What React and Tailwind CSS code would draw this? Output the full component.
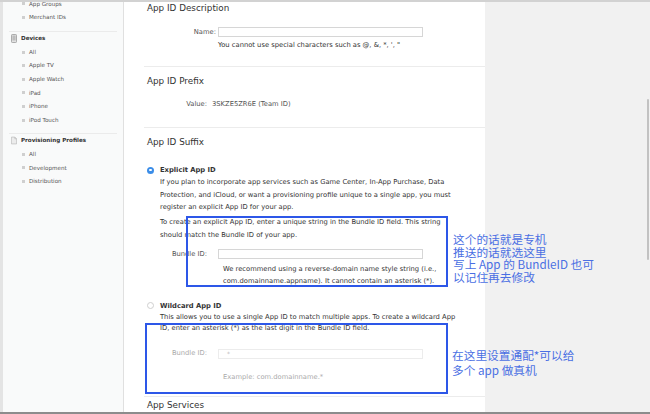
const sideFont = { fontFamily: '"DejaVu Sans", "Liberation Sans", sans-serif' };

function Bullet() {
  return <span className="inline-block w-[3px] h-[3px] bg-[#cfcfcf] mr-[4px]" />;
}

function SideItem({ children }) {
  return (
    <div className="h-[13.6px] flex items-center pl-[19px] text-[5.6px] text-[#555] whitespace-nowrap">
      <Bullet />
      {children}
    </div>
  );
}

function SideHeader({ icon, children }) {
  return (
    <div className="h-[13.6px] flex items-center pl-[8px] text-[5.6px] font-bold text-[#333] whitespace-nowrap">
      <span className="w-[6px] mr-[4px] flex items-center">{icon}</span>
      {children}
    </div>
  );
}

function DeviceIcon() {
  return (
    <svg width="6" height="9" viewBox="0 0 6 9">
      <rect x="0.5" y="0.5" width="5" height="8" rx="0.8" fill="#e2e2e2" stroke="#9a9a9a" strokeWidth="0.8" />
      <rect x="1.4" y="1.5" width="3.2" height="5" fill="#bdbdbd" />
    </svg>
  );
}

function DocIcon() {
  return (
    <svg width="7" height="9" viewBox="0 0 7 9">
      <path d="M0.5 0.5 H4.5 L6.5 2.5 V8.5 H0.5 Z" fill="#ececec" stroke="#b3b3b3" strokeWidth="0.7" />
      <path d="M4.5 0.5 V2.5 H6.5" fill="none" stroke="#b3b3b3" strokeWidth="0.7" />
    </svg>
  );
}

function Sidebar() {
  return (
    <div className="w-[124px] shrink-0 bg-[#f9fafa] border-l-[3px] border-l-[#e4e4e4] border-r border-r-[#e0e0e0] overflow-hidden" style={sideFont}>
      <div className="mt-[-5px]">
        <SideItem>App Groups</SideItem>
        <SideItem>Merchant IDs</SideItem>
        <div className="mt-[6.5px] mx-[6px] border-t border-[#ebebeb]" />
        <SideHeader icon={<DeviceIcon />}>Devices</SideHeader>
        <SideItem>All</SideItem>
        <SideItem>Apple TV</SideItem>
        <SideItem>Apple Watch</SideItem>
        <SideItem>iPad</SideItem>
        <SideItem>iPhone</SideItem>
        <SideItem>iPod Touch</SideItem>
        <div className="mt-[6px] mx-[6px] border-t border-[#ebebeb]" />
        <SideHeader icon={<DocIcon />}>Provisioning Profiles</SideHeader>
        <SideItem>All</SideItem>
        <SideItem>Development</SideItem>
        <SideItem>Distribution</SideItem>
      </div>
    </div>
  );
}

function Heading({ children }) {
  return <div className="h-[13px] leading-[13px] pl-[3px] text-[8.8px] text-[#333] whitespace-nowrap">{children}</div>;
}

function Input({ placeholder, faded }) {
  return (
    <div className={`w-[205px] h-[10px] bg-white border ${faded ? "border-[#ececec]" : "border-[#d6d6d6]"} text-[6px] leading-[8px] pl-[8px] text-[#bbb]`}>
      {placeholder}
    </div>
  );
}

function Main() {
  return (
    <div className="w-[361px] shrink-0 bg-white pl-[20px] text-[6.75px] text-[#333]" style={sideFont}>
      {/* App ID Description */}
      <div className="border-b border-[#ececec] pb-[15px]">
        <Heading>App ID Description</Heading>
        <div className="mt-[12px] flex items-center h-[10px]">
          <div className="w-[74px] pr-[2px] text-right text-[#555]">Name:</div>
          <Input />
        </div>
        <div className="mt-[2px] h-[12px] leading-[12px] pl-[74px] whitespace-nowrap">
          You cannot use special characters such as @, &amp;, *, ', "
        </div>
      </div>

      {/* App ID Prefix */}
      <div className="border-b border-[#ececec] pt-[7.5px] pb-[17px]">
        <Heading>App ID Prefix</Heading>
        <div className="mt-[10.5px] h-[12px] leading-[12px] flex whitespace-nowrap">
          <div className="w-[63px] text-right text-[#555]">Value:</div>
          <div className="pl-[5px] text-[#555]">3SKZE5ZR6E (Team ID)</div>
        </div>
      </div>

      {/* App ID Suffix */}
      <div className="border-b border-[#ececec] pt-[7.5px] pb-[13px]">
        <Heading>App ID Suffix</Heading>

        <div className="mt-[15.5px] h-[12px] flex items-center pl-[3px]">
          <span className="w-[7px] h-[7px] rounded-full bg-[#3b8de8] flex items-center justify-center mr-[6px]">
            <span className="w-[2.5px] h-[2.5px] rounded-full bg-white" />
          </span>
          <span className="font-bold">Explicit App ID</span>
        </div>
        <div className="pl-[16px] leading-[12.5px] whitespace-nowrap">
          If you plan to incorporate app services such as Game Center, In-App Purchase, Data
          <br />
          Protection, and iCloud, or want a provisioning profile unique to a single app, you must
          <br />
          register an explicit App ID for your app.
        </div>
        <div className="mt-[2.5px] pl-[16px] leading-[12.5px] whitespace-nowrap">
          To create an explicit App ID, enter a unique string in the Bundle ID field. This string
          <br />
          should match the Bundle ID of your app.
        </div>
        <div className="mt-[8px] flex items-center h-[10px]">
          <div className="w-[74px] pr-[11px] text-right text-[#555] whitespace-nowrap">Bundle ID:</div>
          <Input />
        </div>
        <div className="mt-[5px] pl-[79px] leading-[11.5px] whitespace-nowrap">
          We recommend using a reverse-domain name style string (i.e.,
          <br />
          com.domainname.appname). It cannot contain an asterisk (*).
        </div>

        <div className="mt-[12.75px] h-[12px] flex items-center pl-[3px]">
          <span className="w-[7px] h-[7px] rounded-full border border-[#cfcfcf] bg-white mr-[6px]" />
          <span className="font-bold">Wildcard App ID</span>
        </div>
        <div className="pl-[16px] leading-[11.5px] whitespace-nowrap">
          This allows you to use a single App ID to match multiple apps. To create a wildcard App
          <br />
          ID, enter an asterisk (*) as the last digit in the Bundle ID field.
        </div>
        <div className="mt-[13.75px] flex items-center h-[10px]">
          <div className="w-[74px] pr-[11px] text-right text-[#aaa] whitespace-nowrap">Bundle ID:</div>
          <Input placeholder="*" faded />
        </div>
        <div className="mt-[12px] h-[12px] leading-[12px] pl-[79px] text-[#aaa] whitespace-nowrap">
          Example: com.domainname.*
        </div>
      </div>

      <div className="pt-[2px]">
        <Heading>App Services</Heading>
      </div>
    </div>
  );
}

export default function App() {
  const cjk = { fontFamily: '"Noto Sans CJK SC", "Noto Sans", sans-serif' };
  return (
    <div className="relative w-[650px] h-[414px] overflow-hidden flex flex-col bg-[#f1f1f1] border-t-2 border-t-[#d2d2d2] border-b-2 border-b-[#8c8c8c]">
      <div className="flex flex-1 min-h-0">
        <Sidebar />
        <Main />
        <div className="flex-1 bg-[#f1f1f1]" />
      </div>

      {/* scrollbar */}
      <div className="absolute left-[647px] top-[97px] w-[2px] h-[161px] bg-[#c2c2c2] rounded-full" />

      {/* annotation boxes */}
      <div className="absolute left-[186px] top-[214px] w-[262px] h-[71px] border-2 border-[#2d57e8]" />
      <div className="absolute left-[145px] top-[321px] w-[303px] h-[71px] border-2 border-[#2d57e8]" />

      <div className="absolute left-[453px] top-[231px] text-[11.7px] leading-[12.7px] text-[#4a6fe3] whitespace-nowrap" style={cjk}>
        这个的话就是专机
        <br />
        推送的话就选这里
        <br />
        写上 App 的 BundleID 也可
        <br />
        以记住再去修改
      </div>
      <div className="absolute left-[452px] top-[345px] text-[11.7px] leading-[15px] text-[#4a6fe3] whitespace-nowrap" style={cjk}>
        在这里设置通配*可以给
        <br />
        多个 app 做真机
      </div>
    </div>
  );
}
